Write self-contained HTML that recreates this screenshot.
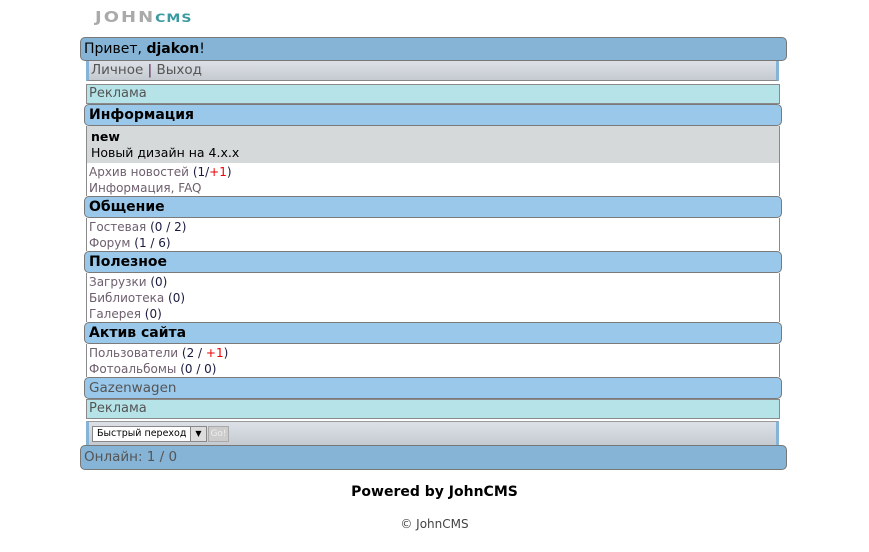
<!DOCTYPE html>
<html><head><meta charset="utf-8"><style>
body{margin:0;width:869px;height:552px;background:#fff;font-family:"DejaVu Sans","Liberation Sans",sans-serif;position:relative;overflow:hidden}
.a{position:absolute;box-sizing:border-box;white-space:nowrap}
.hd{background:#99c8ea;border:1px solid #7a7a7a;border-radius:5px;font-size:14px;font-weight:bold;color:#000;padding-left:4px;line-height:20px;left:84px;width:698px;height:22px}
.ad{background:#b5e3e8;border:1px solid #8a8a8a;font-size:13px;color:#555;padding-left:2px;line-height:18px;left:86px;width:694px;height:20px}
.lst{background:#fff;border-left:1px solid #8a8a8a;border-right:1px solid #8a8a8a;left:86px;width:694px;font-size:12px;line-height:16px;padding-left:2px;padding-top:1px;color:#6d5f6d}
.n{color:#1a1a40}.r{color:#e00}
</style></head><body>
<div class="a" style="left:95px;top:9px;font:bold 18px 'DejaVu Sans',sans-serif;letter-spacing:2px;color:#aaa;line-height:20px;transform:scaleY(0.85);transform-origin:top left">JOHN<span style="color:#3a9aa0;font-size:14px;letter-spacing:1px">CMS</span></div>
<div class="a" style="left:80px;top:37px;width:707px;height:24px;background:#86b4d6;border:1px solid #777;border-radius:5px;font-size:14px;line-height:22px;padding-left:3px">Привет, <b>djakon</b>!</div>
<div class="a" style="left:86px;top:61px;width:693px;height:20px;background:linear-gradient(#dde1e7,#c5cad1);border-left:3px solid #86b4d6;border-right:3px solid #86b4d6;border-bottom:1px solid #888;font-size:13.5px;color:#555;line-height:19px;padding-left:2px">Личное <span style="color:#5a2050">|</span> Выход</div>
<div class="a ad" style="top:84px">Реклама</div>
<div class="a hd" style="top:104px">Информация</div>
<div class="a" style="left:86px;top:126px;width:694px;height:37px;background:#d5d9da;border-left:1px solid #8a8a8a;border-right:1px solid #8a8a8a;font-size:12.5px;line-height:16px;padding:3px 0 0 4px"><b>new</b><br>Новый дизайн на 4.x.x</div>
<div class="a lst" style="top:163px;height:33px">Архив новостей <span class="n">(1/</span><span class="r">+1</span><span class="n">)</span><br>Информация, FAQ</div>
<div class="a hd" style="top:196px">Общение</div>
<div class="a lst" style="top:218px;height:33px">Гостевая <span class="n">(0 / 2)</span><br>Форум <span class="n">(1 / 6)</span></div>
<div class="a hd" style="top:251px">Полезное</div>
<div class="a lst" style="top:273px;height:49px">Загрузки <span class="n">(0)</span><br>Библиотека <span class="n">(0)</span><br>Галерея <span class="n">(0)</span></div>
<div class="a hd" style="top:322px">Актив сайта</div>
<div class="a lst" style="top:344px;height:33px">Пользователи <span class="n">(2 / </span><span class="r">+1</span><span class="n">)</span><br>Фотоальбомы <span class="n">(0 / 0)</span></div>
<div class="a hd" style="top:377px;font-weight:normal;color:#555;font-size:13.5px">Gazenwagen</div>
<div class="a ad" style="top:399px">Реклама</div>
<div class="a" style="left:86px;top:421px;width:693px;height:24px;background:linear-gradient(#dde1e7,#c5cad1);border-left:3px solid #86b4d6;border-right:3px solid #86b4d6;border-top:1px solid #999">
 <div class="a" style="left:3px;top:4px;width:115px;height:16px;background:#fff;border:1px solid #888;font-size:9.5px;line-height:14px;padding-left:4px">Быстрый переход<span style="position:absolute;right:0;top:0;width:15px;height:14px;background:#ddd;border-left:1px solid #888;font-size:8px;text-align:center">▼</span></div>
 <div class="a" style="left:119px;top:4px;width:21px;height:16px;background:#ccc;border:1px solid #aaa;font-size:9px;color:#eee;line-height:14px;text-align:center">Go!</div>
</div>
<div class="a" style="left:80px;top:445px;width:707px;height:25px;background:#86b4d6;border:1px solid #777;border-radius:5px;font-size:13.5px;color:#555;line-height:23px;padding-left:3px">Онлайн: 1 / 0</div>
<div class="a" style="left:0;width:869px;top:484px;text-align:center;font-size:14px;font-weight:bold">Powered by JohnCMS</div>
<div class="a" style="left:0;width:869px;top:517px;text-align:center;font-size:12px;color:#444">© JohnCMS</div>
</body></html>
